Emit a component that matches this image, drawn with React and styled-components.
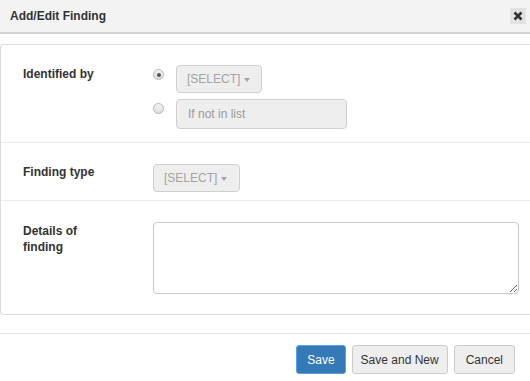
import React from "react";
import styled, { createGlobalStyle } from "styled-components";

const Global = createGlobalStyle`
  html, body { margin: 0; padding: 0; background: #fff; }
  body { font-family: "Liberation Sans", Arial, sans-serif; font-size: 12px; color: #333; overflow: hidden; }
  * { box-sizing: border-box; }
`;

const Modal = styled.div`
  width: 530px;
  height: 381px;
  display: flex;
  flex-direction: column;
  background: #fff;
`;

const Header = styled.div`
  height: 34px;
  background: #f3f3f3;
  border-bottom: 2px solid #d2d2d2;
  display: flex;
  align-items: center;
  justify-content: space-between;
  padding: 0 4px 0 10px;
`;

const Title = styled.h4`
  margin: 0;
  font-size: 12px;
  font-weight: bold;
  color: #333;
`;

const CloseBtn = styled.button`
  width: 16px;
  height: 16px;
  border: 0;
  padding: 0;
  background: #e2e2e2;
  display: flex;
  align-items: center;
  justify-content: center;
  margin-top: -1px;
`;

const Body = styled.div`
  padding: 10px 0 18px 0;
`;

const Panel = styled.div`
  border: 1px solid #dcdcdc;
  border-right: none;
  border-radius: 4px 0 0 4px;
  width: 540px;
`;

const Section = styled.div`
  display: grid;
  grid-template-columns: 152px 1fr;
  padding: ${(p) => p.$pad};
  border-top: ${(p) => (p.$first ? "none" : "1px solid #ececec")};
`;

const Label = styled.div`
  font-weight: bold;
  padding-left: 22px;
  line-height: 16px;
  padding-top: ${(p) => p.$top || 0}px;
`;

const Options = styled.div`
  display: flex;
  flex-direction: column;
  gap: 6px;
`;

const OptionRow = styled.div`
  display: flex;
  align-items: flex-start;
  gap: 12px;
`;

const Radio = styled.span`
  width: 11px;
  height: 11px;
  border-radius: 50%;
  border: 1px solid #b5b5b5;
  background: linear-gradient(#f4f4f4, #dedede);
  margin-top: 4px;
  display: flex;
  align-items: center;
  justify-content: center;
  &::after {
    content: "";
    width: 4px;
    height: 4px;
    border-radius: 50%;
    background: ${(p) => (p.$checked ? "#555" : "transparent")};
  }
`;

const SelectBtn = styled.div`
  height: 28px;
  padding: 0 10px;
  border: 1px solid #cfcfcf;
  border-radius: 4px;
  background: #eeeeee;
  color: #a3a3a3;
  font-size: 12px;
  display: inline-flex;
  align-items: center;
  gap: 4px;
  width: ${(p) => p.$w}px;
`;

const Caret = styled.span`
  width: 0;
  height: 0;
  border-left: 3px solid transparent;
  border-right: 3px solid transparent;
  border-top: 4px solid #a3a3a3;
  margin-top: 1px;
`;

const TextInput = styled.div`
  width: 171px;
  height: 30px;
  border: 1px solid #cfcfcf;
  border-radius: 4px;
  background: #eeeeee;
  color: #9a9a9a;
  display: flex;
  align-items: center;
  padding-left: 11px;
`;

const TextArea = styled.textarea`
  width: 366px;
  height: 72px;
  border: 1px solid #c8c8c8;
  border-radius: 4px;
  resize: both;
  font-family: inherit;
  margin: 0;
  display: block;
`;

const Footer = styled.div`
  border-top: 1px solid #e2e2e2;
  display: flex;
  justify-content: flex-end;
  gap: 6px;
  padding: 11px 15px 0 0;
`;

const Button = styled.button`
  height: 29px;
  padding: 0 ${(p) => p.$px}px;
  border-radius: 3px;
  font-family: inherit;
  font-size: 12px;
  border: 1px solid ${(p) => (p.$primary ? "#5b9ee8" : "#cccccc")};
  background: ${(p) => (p.$primary ? "#337ab7" : "#eeeeee")};
  color: ${(p) => (p.$primary ? "#fff" : "#333")};
`;

export default function App() {
  return (
    <Modal>
      <Global />
      <Header>
        <Title>Add/Edit Finding</Title>
        <CloseBtn aria-label="close">
          <svg width="10" height="10" viewBox="0 0 10 10">
            <path d="M1.5 1.5 L8.5 8.5 M8.5 1.5 L1.5 8.5" stroke="#333" strokeWidth="2.6" />
          </svg>
        </CloseBtn>
      </Header>
      <Body>
        <Panel>
          <Section $first $pad="20px 0 13px 0">
            <Label $top={1}>Identified by</Label>
            <Options>
              <OptionRow>
                <Radio $checked />
                <SelectBtn $w={86}>
                  [SELECT] <Caret />
                </SelectBtn>
              </OptionRow>
              <OptionRow>
                <Radio />
                <TextInput>If not in list</TextInput>
              </OptionRow>
            </Options>
          </Section>
          <Section $pad="21px 0 8px 0">
            <Label $top={0}>Finding type</Label>
            <SelectBtn $w={87}>
              [SELECT] <Caret />
            </SelectBtn>
          </Section>
          <Section $pad="21px 0 20px 0">
            <Label $top={1}>
              Details of
              <br />
              finding
            </Label>
            <TextArea />
          </Section>
        </Panel>
      </Body>
      <Footer>
        <Button $primary $px={10}>Save</Button>
        <Button $px={8}>Save and New</Button>
        <Button $px={11}>Cancel</Button>
      </Footer>
    </Modal>
  );
}
